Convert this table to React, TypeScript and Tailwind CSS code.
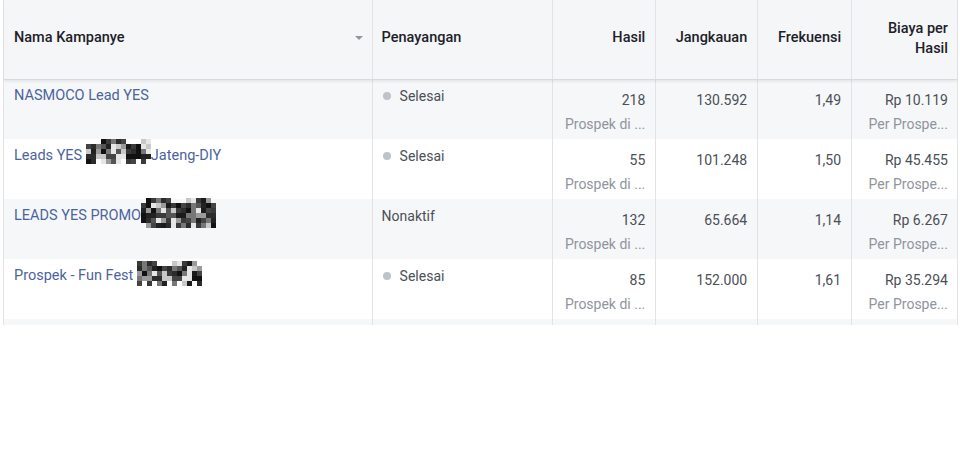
import React from "react";

type Row = {
  name: string;
  tail?: string;
  blot?: { w: number; h: number; seed: number; drop: string };
  status: string;
  dot: boolean;
  results: string;
  reach: string;
  freq: string;
  cost: string;
};

const rows: Row[] = [
  { name: "NASMOCO Lead YES", status: "Selesai", dot: true, results: "218", reach: "130.592", freq: "1,49", cost: "Rp 10.119" },
  {
    name: "Leads YES ",
    blot: { w: 13, h: 5, seed: 3, drop: "-my-[10px] align-[6px]" },
    tail: "Jateng-DIY",
    status: "Selesai",
    dot: true,
    results: "55",
    reach: "101.248",
    freq: "1,50",
    cost: "Rp 45.455",
  },
  {
    name: "LEADS YES PROMO",
    blot: { w: 15, h: 6, seed: 7, drop: "-my-[12px] align-[4px]" },
    status: "Nonaktif",
    dot: false,
    results: "132",
    reach: "65.664",
    freq: "1,14",
    cost: "Rp 6.267",
  },
  {
    name: "Prospek - Fun Fest ",
    blot: { w: 13, h: 5, seed: 11, drop: "-my-[10px] align-[4px]" },
    status: "Selesai",
    dot: true,
    results: "85",
    reach: "152.000",
    freq: "1,61",
    cost: "Rp 35.294",
  },
];

const shades = ["#111111", "#222222", "#3a3a3a", "#555555", "#1b1b1b", "#777777", "#9a9a9a", "#2c2c2c", "#c8c8c8", "#444444", "#e6e6e6"];

// pixelated censor patch
function Mosaic({ w, h, seed, drop }: { w: number; h: number; seed: number; drop: string }) {
  const cells = [];
  for (let y = 0; y < h; y++) {
    for (let x = 0; x < w; x++) {
      const n = (x * 37 + y * 91 + seed * 53 + x * y * 7) % 23;
      const edge = y === 0 || y === h - 1;
      if (edge && n % 3 === 0) continue;
      const c = edge ? shades[(n + 5) % shades.length] : shades[n % shades.length];
      cells.push(<rect key={x + "-" + y} x={x * 5} y={y * 5} width={5} height={5} fill={c} />);
    }
  }
  return (
    <svg className={`inline-block ${drop}`} width={w * 5} height={h * 5} viewBox={`0 0 ${w * 5} ${h * 5}`}>
      {cells}
    </svg>
  );
}

const cols = ["w-[369px]", "w-[181px]", "w-[103px]", "w-[102px]", "w-[94px]", "w-[105px]"];

export default function App() {
  return (
    <div className="w-[960px] h-[450px] bg-white text-[14px] overflow-hidden" style={{ fontFamily: "Roboto, 'Liberation Sans', Arial, sans-serif" }}>
      <div className="ml-[3px] w-[955px] border-l border-r border-[#e1e3e6]">
        {/* header */}
        <div className="relative z-10 flex h-[80px] bg-[#f5f6f7] border-b border-[#d6d9dd] shadow-[0_2px_2px_rgba(0,0,0,0.06)] text-[#1d2129] text-[14.5px] font-medium leading-[20px]">
          <div className={`${cols[0]} flex items-center justify-between pl-[10px] pr-[9px] pb-[4px] border-r border-[#e1e3e6]`}>
            <span>Nama Kampanye</span>
            <span className="w-0 h-0 border-l-[4px] border-r-[4px] border-t-[4px] border-l-transparent border-r-transparent border-t-[#90949c]" />
          </div>
          <div className={`${cols[1]} flex items-center pl-[9px] pb-[4px] border-r border-[#e1e3e6]`}>Penayangan</div>
          <div className={`${cols[2]} flex items-center justify-end pr-[10px] pb-[4px] border-r border-[#e1e3e6]`}>Hasil</div>
          <div className={`${cols[3]} flex items-center justify-end pr-[10px] pb-[4px] border-r border-[#e1e3e6]`}>Jangkauan</div>
          <div className={`${cols[4]} flex items-center justify-end pr-[10px] pb-[4px] border-r border-[#e1e3e6]`}>Frekuensi</div>
          <div className={`${cols[5]} flex items-center justify-end pr-[9px] pb-[2px] text-right`}>
            Biaya per
            <br />
            Hasil
          </div>
        </div>

        {rows.map((r, i) => (
          <div key={i} className={`flex h-[60px] leading-[20px] ${i % 2 === 0 ? "bg-[#f6f7f9]" : "bg-white"} ${i === 0 ? "-mt-px" : ""}`}>
            <div className={`${cols[0]} pl-[10px] pt-[7px] border-r border-[#e1e3e6] text-[#4b64a0] text-[14.5px] whitespace-nowrap`}>
              {r.name}
              {r.blot && <Mosaic w={r.blot.w} h={r.blot.h} seed={r.blot.seed} drop={r.blot.drop} />}
              {r.tail}
            </div>
            <div className={`${cols[1]} pl-[9px] pt-[7px] border-r border-[#e1e3e6] text-[#4b4f56]`}>
              <div className="flex items-center">
                {r.dot && <span className="ml-[1px] mr-[9px] w-[8px] h-[8px] rounded-full bg-[#bec2c9]" />}
                {r.status}
              </div>
            </div>
            <div className={`${cols[2]} pr-[10px] pt-[11px] border-r border-[#e1e3e6] text-right`}>
              <div className="text-[#4b4f56]">{r.results}</div>
              <div className="mt-[4px] text-[#90949c]">Prospek di ...</div>
            </div>
            <div className={`${cols[3]} pr-[10px] pt-[11px] border-r border-[#e1e3e6] text-right text-[#4b4f56]`}>{r.reach}</div>
            <div className={`${cols[4]} pr-[10px] pt-[11px] border-r border-[#e1e3e6] text-right text-[#4b4f56]`}>{r.freq}</div>
            <div className={`${cols[5]} pr-[9px] pt-[11px] text-right`}>
              <div className="text-[#4b4f56]">{r.cost}</div>
              <div className="mt-[4px] text-[#90949c]">Per Prospe...</div>
            </div>
          </div>
        ))}

        {/* top of the next row, cut off */}
        <div className="flex h-[6px] bg-[#f6f7f9]">
          {cols.map((c, i) => (
            <div key={i} className={`${c} ${i < 5 ? "border-r border-[#e1e3e6]" : ""}`} />
          ))}
        </div>
      </div>
    </div>
  );
}
